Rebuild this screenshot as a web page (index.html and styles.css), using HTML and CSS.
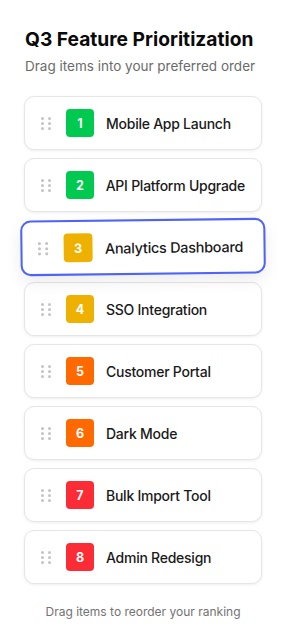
FILE: index.html
```html
<!DOCTYPE html>
<html lang="en">
<head>
<meta charset="utf-8">
<title>Q3 Feature Prioritization</title>
<link rel="stylesheet" href="styles.css">
</head>
<body>
<main class="page">
  <h1 class="title">Q3 Feature Prioritization</h1>
  <p class="subtitle">Drag items into your preferred order</p>
  <ul class="list">
    <li class="card"><span class="handle"><i></i><i></i><i></i><i></i><i></i><i></i></span><span class="badge green">1</span><span class="label">Mobile App Launch</span></li>
    <li class="card"><span class="handle"><i></i><i></i><i></i><i></i><i></i><i></i></span><span class="badge green">2</span><span class="label">API Platform Upgrade</span></li>
    <li class="card dragging"><span class="handle"><i></i><i></i><i></i><i></i><i></i><i></i></span><span class="badge yellow">3</span><span class="label">Analytics Dashboard</span></li>
    <li class="card"><span class="handle"><i></i><i></i><i></i><i></i><i></i><i></i></span><span class="badge yellow">4</span><span class="label">SSO Integration</span></li>
    <li class="card"><span class="handle"><i></i><i></i><i></i><i></i><i></i><i></i></span><span class="badge orange">5</span><span class="label">Customer Portal</span></li>
    <li class="card"><span class="handle"><i></i><i></i><i></i><i></i><i></i><i></i></span><span class="badge orange">6</span><span class="label">Dark Mode</span></li>
    <li class="card"><span class="handle"><i></i><i></i><i></i><i></i><i></i><i></i></span><span class="badge red">7</span><span class="label">Bulk Import Tool</span></li>
    <li class="card"><span class="handle"><i></i><i></i><i></i><i></i><i></i><i></i></span><span class="badge red">8</span><span class="label">Admin Redesign</span></li>
  </ul>
  <p class="footer">Drag items to reorder your ranking</p>
</main>
</body>
</html>
```

FILE: styles.css
```css
* { box-sizing: border-box; }
html, body { margin: 0; padding: 0; background: #ffffff; }
body {
  font-family: Inter, "Liberation Sans", Arial, sans-serif;
  color: #171717;
}
.page {
  padding: 25px 24px 0 24px;
}
.title {
  margin: 0 0 0 1px;
  font-size: 19.2px;
  line-height: 28px;
  font-weight: 700;
  color: #0a0a0a;
  white-space: nowrap;
}
.subtitle {
  margin: 3px 0 0 1px;
  font-size: 13.5px;
  line-height: 20px;
  color: #6b6b6b;
  white-space: nowrap;
}
.list {
  list-style: none;
  margin: 20px 0 0 0;
  padding: 0;
  display: flex;
  flex-direction: column;
  gap: 8px;
}
.card {
  height: 54px;
  display: flex;
  align-items: center;
  padding: 0 16px;
  background: #fff;
  border: 1px solid #e6e6e6;
  border-radius: 10px;
  box-shadow: 0 1px 3px rgba(0,0,0,0.07);
}
.card.dragging {
  border: 2px solid #4f63f6;
  padding: 0 15px;
  transform: scale(1.03) rotate(-0.7deg);
  box-shadow: 0 6px 16px rgba(0,0,0,0.08);
}
.handle {
  width: 10px;
  display: grid;
  grid-template-columns: 3px 3px;
  column-gap: 4px;
  row-gap: 2px;
}
.handle i {
  display: block;
  width: 3px;
  height: 3px;
  border-radius: 50%;
  background: #c4c4c4;
}
.badge {
  width: 28px;
  height: 28px;
  margin-left: 15px;
  border-radius: 4px;
  display: flex;
  align-items: center;
  justify-content: center;
  color: #fff;
  font-size: 12.5px;
  font-weight: 700;
}
.green { background: #00c950; }
.yellow { background: #efb100; }
.orange { background: #ff6900; }
.red { background: #fb2c36; }
.label {
  margin-left: 12px;
  font-size: 14px;
  font-weight: 500;
  letter-spacing: -0.25px;
  color: #1a1a1a;
  white-space: nowrap;
}
.footer {
  margin: 20px 0 0 0;
  text-align: center;
  font-size: 12px;
  line-height: 16px;
  color: #737373;
}
```
